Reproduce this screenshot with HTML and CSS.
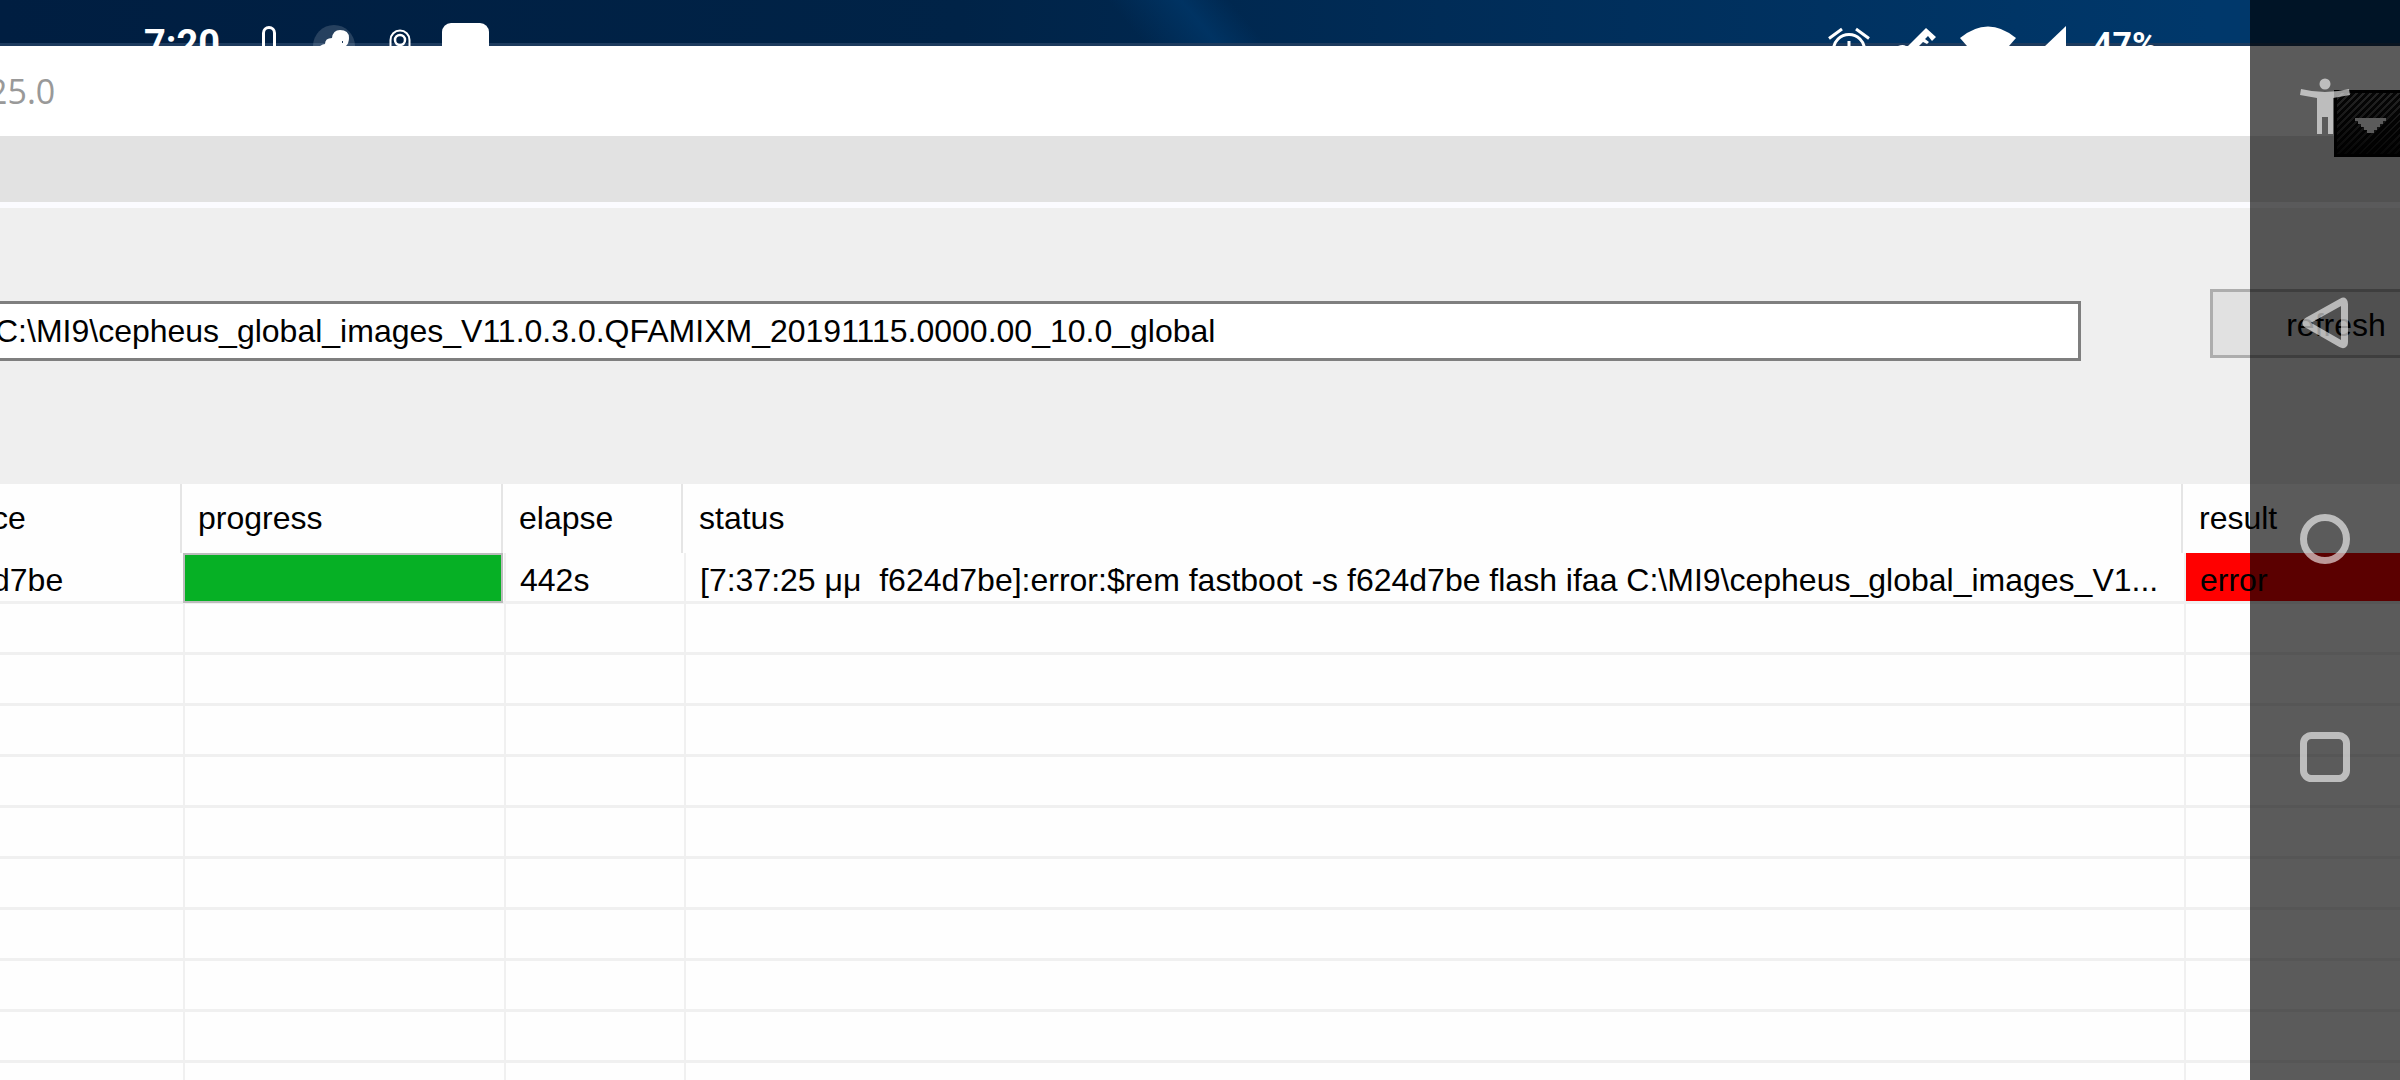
FILE: index.html
```html
<!DOCTYPE html>
<html lang="en">
<head>
<meta charset="utf-8">
<title>Flash tool</title>
<link rel="stylesheet" href="styles.css">
</head>
<body>
<header class="status-bar">
  <div class="status-group">
    <span class="clock">7:20</span>
    <svg class="mic" width="14" height="46" viewBox="0 0 14 46"><rect x="1.5" y="27.5" width="11" height="36" rx="5.5" fill="none" stroke="#fff" stroke-width="3"/></svg>
    <svg class="cloud" width="44" height="46" viewBox="0 0 44 46"><circle cx="22" cy="46" r="21" fill="#fff" fill-opacity=".15"/><path d="M8 46q3-2 5-2q0-6 7-6q1-8 8-8q9 0 9 8q0 5-3 8z" fill="#fff"/><path d="M30 41h1v2h-1z" fill="#24405f"/></svg>
    <svg class="cast" width="22" height="46" viewBox="0 0 22 46"><path d="M1.500 46V40a9.500 9.500 0 0 1 19 0V46" fill="none" stroke="#fff" stroke-width="2"/><circle cx="11" cy="40" r="5" fill="none" stroke="#fff" stroke-width="2.500"/></svg>
    <svg width="47" height="46" viewBox="0 0 47 46"><rect y="23" width="47" height="40" rx="9" fill="#fff"/></svg>
  </div>
  <div class="status-group status-right">
    <svg class="alarm" width="42" height="46" viewBox="0 0 42 46"><g fill="none" stroke="#fff" stroke-width="3"><circle cx="21" cy="50" r="15.500"/><path d="M1 38.500L14 29M28 29L41 38.500M21 41v9"/></g></svg>
    <svg class="key" width="38" height="46" viewBox="0 0 38 46"><path d="M10 46L28 28L38 37L34 41L30 36L27 39L31 42L29 44L25 42L21 46zM0 46q5-2 8 0z" fill="#fff"/></svg>
    <svg class="wifi" width="56" height="46" viewBox="0 0 56 46"><path d="M0 38Q28 15 56 38L28 70z" fill="#fff"/></svg>
    <svg class="signal" width="22" height="46" viewBox="0 0 22 46"><path d="M22 26V48H-1z" fill="#fff"/></svg>
    <span class="battery">47%</span>
  </div>
</header>

<main class="window">
  <div class="title-bar">25.0</div>
  <div class="menu-bar"></div>
  <form class="path-form">
    <input class="path" type="text" aria-label="Image folder" value="C:\MI9\cepheus_global_images_V11.0.3.0.QFAMIXM_20191115.0000.00_10.0_global">
    <button class="refresh" type="button">refresh</button>
  </form>
  <table class="devices">
    <colgroup><col class="col-device"><col class="col-progress"><col class="col-elapse"><col><col class="col-result"></colgroup>
    <thead>
      <tr><th><div>ce</div></th><th><div>progress</div></th><th><div>elapse</div></th><th><div>status</div></th><th><div>result</div></th></tr>
    </thead>
    <tbody>
      <tr>
        <td>d7be</td>
        <td class="progress-cell"><progress value="100" max="100" aria-label="Flashing progress"></progress></td>
        <td>442s</td>
        <td>[7:37:25 μμ&nbsp; f624d7be]:error:$rem fastboot -s f624d7be flash ifaa C:\MI9\cepheus_global_images_V1...</td>
        <td class="error">error</td>
      </tr>
      <tr><td></td><td></td><td></td><td></td><td></td></tr>
      <tr><td></td><td></td><td></td><td></td><td></td></tr>
      <tr><td></td><td></td><td></td><td></td><td></td></tr>
      <tr><td></td><td></td><td></td><td></td><td></td></tr>
      <tr><td></td><td></td><td></td><td></td><td></td></tr>
      <tr><td></td><td></td><td></td><td></td><td></td></tr>
      <tr><td></td><td></td><td></td><td></td><td></td></tr>
      <tr><td></td><td></td><td></td><td></td><td></td></tr>
      <tr><td></td><td></td><td></td><td></td><td></td></tr>
      <tr><td></td><td></td><td></td><td></td><td></td></tr>
    </tbody>
  </table>
</main>

<div class="drop-tab"><svg width="66" height="67" viewBox="0 0 66 67"><path d="M21 28h31v3h-3v3h-3v3h-3v3h-3v3h-7v-3h-3v-3h-3v-3h-3v-3h-3z" fill="#fff"/></svg></div>

<nav class="nav-bar">
  <button class="nav-access" type="button" aria-label="Accessibility"><svg width="50" height="56" viewBox="0 0 50 56"><circle cx="25" cy="6" r="5.500"/><path d="M1 11Q25 17 49 11L50 17L33 20V56H28V39H22V56H17V20L0 17z"/></svg></button>
  <button class="nav-back" type="button" aria-label="Back"><svg width="46" height="52" viewBox="0 0 46 52"><path class="line" d="M40 4.500Q42.500 3 42.500 7V45Q42.500 49 39 47L6 28Q2 26 6 23.500z"/></svg></button>
  <button class="nav-home" type="button" aria-label="Home"><svg width="50" height="50" viewBox="0 0 50 50"><circle class="line" cx="25" cy="25" r="21.500"/></svg></button>
  <button class="nav-recent" type="button" aria-label="Recent apps"><svg width="50" height="50" viewBox="0 0 50 50"><rect class="line" x="3.500" y="3.500" width="43" height="43" rx="8"/></svg></button>
</nav>
</body>
</html>
```
FILE: styles.css
```css
* { box-sizing: border-box; }

body {
  margin: 0;
  position: relative;
  height: 100vh;
  overflow: hidden;
  background: #fefefe;
  color: #000;
  font-family: "Liberation Sans", Arial, sans-serif;
  font-size: 32px;
}

svg { display: block; flex: none; }

.status-bar {
  display: flex;
  justify-content: space-between;
  height: 46px;
  padding: 0 244px 0 144px;
  overflow: hidden;
  background:
    linear-gradient(to bottom, transparent 43px, #1d3b5e 43px),
    linear-gradient(50deg, transparent 47%, rgba(0, 56, 107, .7) 50%, transparent 52%),
    linear-gradient(to right, #001e41, #002347 40%, #002c57 60%, #00386b 92%);
  color: #fff;
  font-family: Roboto, sans-serif;
  font-weight: 700;
  line-height: 36px;
}

.status-group { display: flex; align-items: flex-start; }
.clock, .battery { padding-top: 26px; }
.clock { font-size: 38px; width: 118px; }
.battery { font-size: 34px; width: 63px; }
.mic { margin-right: 36px; }
.cloud { margin-right: 33px; }
.cast { margin-right: 31px; }
.alarm { margin-right: 28px; }
.key { margin-right: 24px; }
.wifi { margin-right: 28px; }
.signal { margin-right: 27px; }

.title-bar {
  height: 90px;
  line-height: 90px;
  background: #fff;
  color: #999;
  font-family: "Open Sans", sans-serif;
  font-size: 34px;
  text-indent: -12px;
}

.menu-bar {
  height: 72px;
  background: #e2e2e2;
  border-bottom: 6px solid #fbfbff;
}

.path-form {
  display: flex;
  align-items: flex-start;
  height: 276px;
  padding-top: 81px;
  background: #efefef;
}

.path {
  flex: 1;
  min-width: 0;
  height: 60px;
  margin: 12px 129px 0 -12px;
  padding: 0 0 0 4px;
  border: 3px solid #7f7f7f;
  background: #fff;
  color: #000;
  font: inherit;
}

.refresh {
  flex: none;
  width: 252px;
  height: 69px;
  margin-right: -62px;
  padding: 4px 0 0;
  border: 3px solid #adadad;
  background: #e1e1e1;
  color: #000;
  font: inherit;
}

.devices {
  width: 100%;
  table-layout: fixed;
  border-collapse: separate;
  border-spacing: 0;
}

.col-device { width: 185px; }
.col-progress { width: 321px; }
.col-elapse { width: 180px; }
.col-result { width: 214px; }

th {
  height: 69px;
  padding: 0 3px 0 0;
  font-weight: 400;
  text-align: left;
}

th div {
  height: 69px;
  padding-left: 13px;
  border-right: 2px solid #e5e5e5;
  line-height: 68px;
}

td {
  height: 51px;
  padding: 6px 0 0 14px;
  border-right: 2px solid #f0f0f0;
  border-bottom: 3px solid #f0f0f0;
  line-height: 42px;
  white-space: nowrap;
}

th:first-child div, td:first-child { padding-left: 0; text-indent: -8px; }
th:last-child { padding: 0; }
th:last-child div, td:last-child { border-right: 0; }

.error { background: #f00 padding-box; }
.progress-cell { padding: 0; }

progress {
  display: block;
  appearance: none;
  width: 320px;
  height: 50px;
  margin: 0 0 -2px -2px;
  border: 2px solid #bcbcbc;
}

progress::-webkit-progress-bar { background: #e6e6e6; }
progress::-webkit-progress-value { background: #06b025; }

.drop-tab {
  position: absolute;
  top: 90px;
  right: 0;
  border: 3px solid #000;
  border-right: 0;
  width: 66px;
  height: 67px;
  background:
    linear-gradient(to bottom, transparent, rgba(0, 0, 0, .8)),
    repeating-linear-gradient(135deg, #111 0 3px, #666 3px 5px);
}

.drop-tab svg { margin: -3px 0 0 -3px; }

.nav-bar {
  position: absolute;
  top: 0;
  right: 0;
  bottom: 0;
  width: 150px;
  display: flex;
  flex-direction: column;
  align-items: center;
  padding-top: 78px;
  background: rgba(0, 0, 0, .643);
}

.nav-bar button {
  padding: 0;
  border: 0;
  background: none;
}

.nav-bar svg { fill: #fff; opacity: .6; }
.nav-bar .line { fill: none; stroke: #fff; stroke-width: 7; }
.nav-access { margin-bottom: 163px; }
.nav-back { margin-bottom: 165px; }
.nav-home { margin-bottom: 168px; }
```
